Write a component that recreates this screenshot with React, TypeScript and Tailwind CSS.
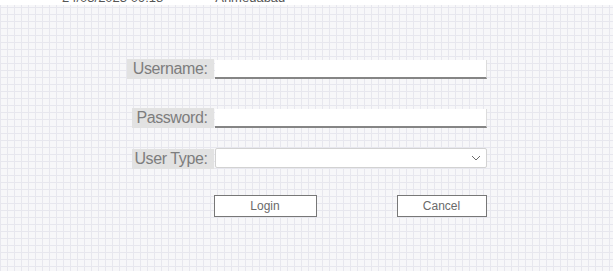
const gridBg =
  "bg-[#f7f7f9] bg-[linear-gradient(to_right,#e7e7ee_1px,transparent_1px),linear-gradient(to_bottom,#e7e7ee_1px,transparent_1px)] bg-[size:7px_7px]";

function FieldLabel({ text, width }: { text: string; width: string }) {
  return (
    <div className="flex w-[87px] shrink-0 justify-end">
      <span
        className={`${width} h-[20px] bg-[#e2e2e2] pr-[6px] text-right text-[16px] leading-[20px] tracking-[-0.4px] text-[#7d7d7d]`}
      >
        {text}
      </span>
    </div>
  );
}

export default function App() {
  return (
    <div
      className={`flex h-[271px] w-full flex-col overflow-hidden ${gridBg}`}
      style={{ fontFamily: '"Liberation Sans", Arial, sans-serif' }}
    >
      {/* clipped header strip */}
      <div className="flex h-[5px] shrink-0 overflow-hidden bg-white text-[13px] leading-[15px] text-[#555]">
        <span className="ml-[62px] -mt-[10px]">24/03/2023 09:18</span>
        <span className="ml-[52px] -mt-[10px]">Ahmedabad</span>
      </div>

      <div className="mx-auto mt-[54px] flex w-[360px] flex-col">
        {/* Username */}
        <div className="flex items-start">
          <FieldLabel text="Username:" width="w-[87px]" />
          <div className="ml-px mt-px h-[19px] w-[272px] border-r border-b-2 border-r-[#dcdcdc] border-b-[#858585] bg-white" />
        </div>

        {/* Password */}
        <div className="mt-[29px] flex items-start">
          <FieldLabel text="Password:" width="w-[82px]" />
          <div className="ml-px mt-px h-[19px] w-[272px] border-r border-b-2 border-r-[#dcdcdc] border-b-[#858585] bg-white" />
        </div>

        {/* User Type */}
        <div className="mt-[21px] flex items-start">
          <FieldLabel text="User Type:" width="w-[82px]" />
          <div className="ml-px -mt-px flex h-[20px] w-[272px] items-center justify-end rounded-[2px] border border-[#d2d2d2] bg-white pr-[5px]">
            <svg width="10" height="6" viewBox="0 0 10 6" fill="none">
              <path d="M1 1l4 4 4-4" stroke="#6b6b6b" strokeWidth="1" />
            </svg>
          </div>
        </div>

        {/* Buttons */}
        <div className="mt-[26px] flex pl-[87px]">
          <button className="h-[22px] w-[103px] border border-[#777] bg-white text-[12px] text-[#6a6a6a]">
            Login
          </button>
          <button className="ml-[80px] h-[22px] w-[90px] border border-[#777] bg-white text-[12px] text-[#6a6a6a]">
            Cancel
          </button>
        </div>
      </div>
    </div>
  );
}
